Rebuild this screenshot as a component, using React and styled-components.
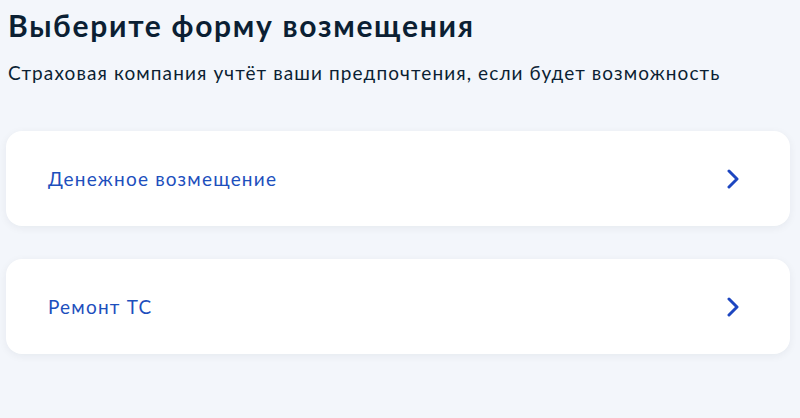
import React from 'react';
import styled, { createGlobalStyle } from 'styled-components';

const GlobalStyle = createGlobalStyle`
  html, body {
    margin: 0;
    padding: 0;
    background: #f3f6fb;
    font-family: Lato, "Noto Sans", sans-serif;
  }
`;

const Page = styled.div`
  width: 800px;
  height: 418px;
  box-sizing: border-box;
  padding: 5px 10px 0 6px;
  color: #0b1f33;
`;

const Title = styled.h1`
  margin: 0 0 0 2px;
  font-size: 30px;
  line-height: 40px;
  font-weight: 700;
  letter-spacing: 1.7px;
`;

const Subtitle = styled.p`
  margin: 16px 0 0 2px;
  font-size: 19px;
  line-height: 24px;
  font-weight: 400;
  letter-spacing: 1.1px;
`;

const List = styled.div`
  margin-top: 46px;
  display: flex;
  flex-direction: column;
  gap: 33px;
`;

const Card = styled.button`
  display: flex;
  align-items: center;
  justify-content: space-between;
  height: 95px;
  padding: 0 50px 0 42px;
  border: none;
  border-radius: 16px;
  background: #ffffff;
  box-shadow: 0 2px 8px rgba(11, 31, 51, 0.06);
  font-family: inherit;
  cursor: pointer;
  text-align: left;
`;

const Label = styled.span`
  font-size: 19px;
  letter-spacing: 1.2px;
  color: #1d4fbd;
`;

const Chevron = () => (
  <svg width="14" height="20" viewBox="0 0 14 20" fill="none">
    <path d="M3 2l8 8-8 8" stroke="#1d46c0" strokeWidth="3" strokeLinecap="round" strokeLinejoin="round" />
  </svg>
);

const options = ['Денежное возмещение', 'Ремонт ТС'];

export default function App() {
  return (
    <Page>
      <GlobalStyle />
      <Title>Выберите форму возмещения</Title>
      <Subtitle>Страховая компания учтёт ваши предпочтения, если будет возможность</Subtitle>
      <List>
        {options.map((o) => (
          <Card key={o}>
            <Label>{o}</Label>
            <Chevron />
          </Card>
        ))}
      </List>
    </Page>
  );
}
